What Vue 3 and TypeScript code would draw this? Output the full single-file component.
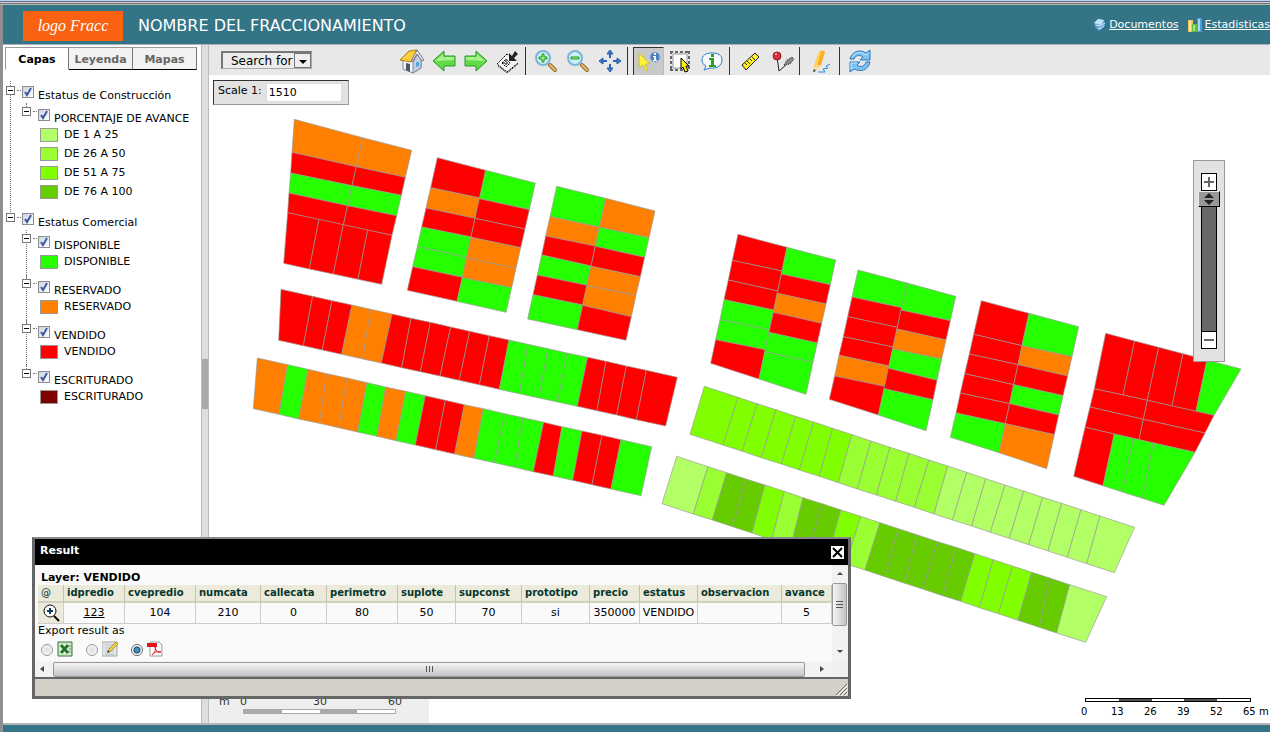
<script setup lang="ts">
import { ref } from 'vue'

type Point = [number, number]
type Status = 'R' | 'O' | 'G' | 'L' | 'M' | 'B' | 'D'

interface Band {
  a: [Point, Point]
  b: [Point, Point]
  axis: 0 | 1
  cutsA: number[]
  cutsB: number[]
  lots: string
}

interface Sheet {
  x: number
  y: number
  bands: Band[]
}

const fills: Record<Status, string> = {
  R: '#ff0000',
  O: '#ff8000',
  G: '#26ff00',
  L: '#b3ff66',
  M: '#99ff33',
  B: '#80ff00',
  D: '#66cc00',
}

// A block with two columns of lots that share a centre line.
function block(
  top: [Point, Point, Point],
  bottom: [Point, Point, Point],
  left: [number[], number[], string],
  right: [number[], number[], string],
): Band[] {
  return [
    { a: [top[0], bottom[0]], b: [top[1], bottom[1]], axis: 1, cutsA: left[0], cutsB: left[1], lots: left[2] },
    { a: [top[1], bottom[1]], b: [top[2], bottom[2]], axis: 1, cutsA: right[0], cutsB: right[1], lots: right[2] },
  ]
}

const sheets: Sheet[] = [
  {
    x: 93,
    y: 75,
    bands: [
      { a: [[163, 58], [143, 338]], b: [[368, 113], [310, 375]], axis: 1, cutsA: [157, 219, 279], cutsB: [200, 257, 317], lots: 'ORGR' },
      { a: [[368, 113], [310, 375]], b: [[515, 151], [456, 406]], axis: 1, cutsA: [200, 257, 317], cutsB: [232, 286, 347], lots: 'ORGR' },
      { a: [[143, 338], [456, 406]], b: [[131, 490], [425, 553]], axis: 0, cutsA: [237, 310, 383], cutsB: [208, 280, 354], lots: 'RRRR' },
      ...block(
        [[592, 173], [737, 211], [886, 249]],
        [[502, 571], [651, 604], [798, 637]],
        [[263, 324, 381, 440, 500], [294, 355, 411, 472, 532], 'RORGGR'],
        [[296, 355, 412, 474, 533], [329, 387, 443, 505, 563], 'GRROOG'],
      ),
      ...block(
        [[950, 259], [1097, 295], [1245, 333]],
        [[863, 657], [1012, 689], [1158, 721]],
        [[350, 408, 465, 525, 584], [381, 438, 498, 556, 615], 'GORGRG'],
        [[382, 439, 499, 557, 616], [413, 472, 530, 586, 650], 'OGROOR'],
      ),
      {
        a: [[123, 568], [1312, 832]],
        b: [[116, 721], [1277, 978]],
        axis: 0,
        cutsA: [218, 276, 336, 392, 456, 513, 571, 632, 689, 748, 807, 864, 924, 981, 1043, 1098, 1159, 1219],
        cutsB: [190, 247, 305, 368, 424, 485, 541, 600, 658, 718, 778, 838, 897, 953, 1012, 1071, 1130, 1189],
        lots: 'RRROORRRRRRGGGGRRRR',
      },
      {
        a: [[52, 774], [1235, 1040]],
        b: [[40, 926], [1203, 1187]],
        axis: 0,
        cutsA: [143, 204, 260, 321, 381, 437, 497, 556, 616, 673, 730, 794, 849, 911, 966, 1026, 1086, 1143],
        cutsB: [117, 176, 238, 296, 353, 411, 468, 526, 587, 644, 702, 763, 824, 880, 940, 998, 1056, 1113],
        lots: 'OGOOOGOGRROGGGRGRRG',
      },
    ],
  },
  {
    x: 1323,
    y: 435,
    bands: [
      ...block(
        [[264, 43], [411, 82], [557, 120]],
        [[182, 430], [327, 477], [468, 523]],
        [[121, 180, 239, 299, 359], [153, 213, 270, 329, 389], 'RRRGGR'],
        [[162, 220, 277, 337, 395], [194, 252, 310, 369, 427], 'GRORGG'],
      ),
      ...block(
        [[624, 150], [771, 189], [917, 229]],
        [[538, 538], [685, 585], [828, 632]],
        [[231, 290, 350, 406, 468], [263, 322, 381, 438, 499], 'GRRROR'],
        [[270, 327, 387, 445, 506], [302, 360, 417, 481, 539], 'GROGRG'],
      ),
      {
        a: [[163, 499], [1454, 922]],
        b: [[120, 643], [1393, 1058]],
        axis: 0,
        cutsA: [264, 321, 378, 437, 491, 548, 606, 663, 720, 777, 837, 893, 950, 1007, 1065, 1121, 1178, 1235, 1293, 1350],
        cutsB: [219, 277, 334, 394, 448, 508, 565, 622, 679, 737, 793, 852, 908, 965, 1021, 1078, 1136, 1194, 1252, 1310],
        lots: 'BBBBBBBMMMMMLLLLLLLLL',
      },
      {
        a: [[80, 709], [1370, 1130]],
        b: [[36, 851], [1307, 1267]],
        axis: 0,
        cutsA: [174, 230, 288, 345, 403, 459, 516, 573, 632, 690, 745, 800, 863, 918, 975, 1030, 1088, 1145, 1199, 1259],
        cutsB: [130, 187, 248, 306, 365, 423, 475, 532, 588, 645, 705, 765, 818, 878, 932, 988, 1045, 1104, 1168, 1220],
        lots: 'LMDDBMDDBMDDDDDBBBDDL',
      },
    ],
  },
  {
    x: 2163,
    y: 585,
    bands: [
      ...block(
        [[154, 92], [297, 130], [446, 170]],
        [[61, 502], [207, 548], [350, 596]],
        [[193, 252, 311, 369, 429], [227, 284, 344, 401, 461], 'RRRRRG'],
        [[227, 284, 344, 401, 461], [260, 318, 377, 435, 494], 'GORGRO'],
      ),
      { a: [[527, 190], [933, 297]], b: [[493, 356], [852, 436]], axis: 0, cutsA: [614, 686, 759, 831], cutsB: [579, 652, 726, 798], lots: 'RRRRG' },
      { a: [[493, 356], [465, 472]], b: [[652, 391], [627, 509]], axis: 1, cutsA: [411], cutsB: [448], lots: 'RR' },
      { a: [[652, 391], [627, 509]], b: [[852, 436], [795, 547]], axis: 1, cutsA: [448], cutsB: [489], lots: 'RR' },
      { a: [[465, 472], [795, 547]], b: [[431, 619], [702, 706]], axis: 0, cutsA: [553, 610, 670], cutsB: [519, 577, 637], lots: 'RGGG' },
    ],
  },
]

function cutPoints(edge: [Point, Point], axis: 0 | 1, cuts: number[]): Point[] {
  const [s, e] = edge
  const mids = cuts.map((c): Point => {
    const t = (c - s[axis]) / (e[axis] - s[axis])
    return [s[0] + t * (e[0] - s[0]), s[1] + t * (e[1] - s[1])]
  })
  return [s, ...mids, e]
}

const lots = sheets.flatMap((sheet) =>
  sheet.bands.flatMap((band) => {
    const a = cutPoints(band.a, band.axis, band.cutsA)
    const b = cutPoints(band.b, band.axis, band.cutsB)
    return band.lots.split('').map((status, i) => ({
      fill: fills[status as Status],
      points: [a[i], a[i + 1], b[i + 1], b[i]]
        .map(([x, y]) => `${Math.round(x + sheet.x)},${Math.round(y + sheet.y)}`)
        .join(' '),
    }))
  }),
)

const tabs = ['Capas', 'Leyenda', 'Mapas']
const activeTab = ref('Capas')

const tree = ref([
  {
    name: 'Estatus de Construcción',
    on: true,
    layers: [
      {
        name: 'PORCENTAJE DE AVANCE',
        on: true,
        classes: [
          { name: 'DE 1 A 25', tone: 'light' },
          { name: 'DE 26 A 50', tone: 'medium' },
          { name: 'DE 51 A 75', tone: 'bright' },
          { name: 'DE 76 A 100', tone: 'deep' },
        ],
      },
    ],
  },
  {
    name: 'Estatus Comercial',
    on: true,
    layers: [
      { name: 'DISPONIBLE', on: true, classes: [{ name: 'DISPONIBLE', tone: 'free' }] },
      { name: 'RESERVADO', on: true, classes: [{ name: 'RESERVADO', tone: 'held' }] },
      { name: 'VENDIDO', on: true, classes: [{ name: 'VENDIDO', tone: 'sold' }] },
      { name: 'ESCRITURADO', on: true, classes: [{ name: 'ESCRITURADO', tone: 'deeded' }] },
    ],
  },
])

const columns = [
  { name: 'idpredio', value: '123', width: 61 },
  { name: 'cvepredio', value: '104', width: 71 },
  { name: 'numcata', value: '210', width: 65 },
  { name: 'callecata', value: '0', width: 66 },
  { name: 'perimetro', value: '80', width: 71 },
  { name: 'suplote', value: '50', width: 58 },
  { name: 'supconst', value: '70', width: 66 },
  { name: 'prototipo', value: 'si', width: 68 },
  { name: 'precio', value: '350000', width: 50 },
  { name: 'estatus', value: 'VENDIDO', width: 58 },
  { name: 'observacion', value: '', width: 84 },
  { name: 'avance', value: '5', width: 50 },
]

const scale = ref('1510')
const zoom = ref(100)
const exportAs = ref('pdf')
const resultOpen = ref(true)
</script>

<template>
  <div class="page">
    <div class="frame-top"></div>
    <header class="header">
      <div class="logo">logo Fracc</div>
      <h1>NOMBRE DEL FRACCIONAMIENTO</h1>
      <nav class="links">
        <a href="#documentos">
          <svg width="15" height="16" viewBox="0 0 15 16" aria-hidden="true">
            <path d="M2 6 6 2l6 1 1 6-6 5-4-4z" fill="#5fa6da" />
            <path d="M2 6 6 2l6 1-3 5z" fill="#c2e3f7" />
            <path d="M4 8l4 1 5-3M6 11l2 1 4-3" stroke="#d5ecf9" fill="none" />
          </svg>
          <span>Documentos</span>
        </a>
        <a href="#estadisticas">
          <svg width="16" height="16" viewBox="0 0 16 16" aria-hidden="true">
            <path d="M1 3h5v12H1z" fill="#f6c35a" /><path d="M2 4h2v10H2z" fill="#ffe9ad" />
            <path d="M5 7h5v8H5z" fill="#62bd3e" /><path d="M6 8h2v6H6z" fill="#a7e489" />
            <path d="M10 1h5v14h-5z" fill="#4a9ddd" /><path d="M11 2h2v12h-2z" fill="#a8d6f7" />
          </svg>
          <span>Estadisticas</span>
        </a>
      </nav>
    </header>

    <div class="workspace">
      <aside class="sidebar">
        <div class="tabs" role="tablist">
          <button
            v-for="tab in tabs"
            :key="tab"
            type="button"
            role="tab"
            :aria-selected="activeTab === tab"
            :class="['tab', { active: activeTab === tab }]"
            @click="activeTab = tab"
          >{{ tab }}</button>
        </div>
        <ul class="tree">
          <li v-for="group in tree" :key="group.name" class="group">
            <div class="row group-row">
              <button type="button" class="expander" :aria-label="`Toggle ${group.name}`"></button>
              <label><input v-model="group.on" type="checkbox" /><span>{{ group.name }}</span></label>
            </div>
            <ul class="layers">
              <li v-for="layer in group.layers" :key="layer.name" class="layer">
                <div class="row layer-row">
                  <button type="button" class="expander" :aria-label="`Toggle ${layer.name}`"></button>
                  <label><input v-model="layer.on" type="checkbox" /><span>{{ layer.name }}</span></label>
                </div>
                <div v-for="item in layer.classes" :key="item.name" class="legend">
                  <span :class="['swatch', item.tone]"></span>
                  <span>{{ item.name }}</span>
                </div>
              </li>
            </ul>
          </li>
        </ul>
      </aside>

      <div class="splitter"><span></span></div>

      <main class="main">
        <div class="toolbar" role="toolbar">
          <div class="search">
            <select aria-label="Search for"><option>Search for</option></select>
            <span class="arrow"></span>
          </div>

          <div class="tools">
            <button type="button" class="tool" aria-label="Full extent">
              <svg width="26" height="26" viewBox="0 0 26 26">
                <path d="M4 12v9l10 4 8-5v-9l-5-5z" fill="#f3f5fa" stroke="#7b86a8" />
                <path d="M14 14v11l8-5v-9l-4-4z" fill="#c6cde2" stroke="#7b86a8" />
                <path d="M1 12 10 3l8-1-5 11-1 1z" fill="#f8cf3a" stroke="#a77c16" />
                <path d="m18 2 7 10-2 1-5-7-5 8-1-1z" fill="#e6eaf3" stroke="#777" />
                <path d="M7 15v7l4 2v-8z" fill="#4f5568" />
                <path d="M17 14h3v4l-3 1z" fill="#4ea9df" />
              </svg>
            </button>
            <button type="button" class="tool" aria-label="Back">
              <svg width="26" height="26" viewBox="0 0 26 26">
                <path d="M2 13 13 3v5h11v10H13v5z" fill="#5fdc48" stroke="#2a962c" />
                <path d="m4 13 8-7v3h11v3z" fill="#a8f28e" />
              </svg>
            </button>
            <button type="button" class="tool" aria-label="Forward">
              <svg width="26" height="26" viewBox="0 0 26 26">
                <path d="M24 13 13 3v5H2v10h11v5z" fill="#5fdc48" stroke="#2a962c" />
                <path d="m22 13-8-7v3H3v3z" fill="#a8f28e" />
              </svg>
            </button>
            <button type="button" class="tool" aria-label="Initial location">
              <svg width="26" height="26" viewBox="0 0 26 26">
                <path d="M2 16 12 6l11 8-10 9z" fill="#f6f6f6" />
                <path d="M12 6 2 16l10 8 11-9" fill="none" stroke="#000" stroke-dasharray="2 1" />
                <path d="m12 6 3 2M3 18l9 7 11-9" fill="none" stroke="#000" stroke-dasharray="1 1" />
                <path d="m7 15 4-4 4 4-4 4zM11 12v6M8 15h6" fill="none" stroke="#000" stroke-dasharray="2 1" />
                <path d="M14 5v8h8l-3-3 4-4-3-3-3 5z" fill="#222" />
              </svg>
            </button>
            <i class="sep"></i>
            <button type="button" class="tool" aria-label="Zoom in">
              <svg width="26" height="26" viewBox="0 0 26 26">
                <path d="m17 17 5 5" stroke="#8b6a37" stroke-width="4" stroke-linecap="round" />
                <path d="m17 17 5 5" stroke="#f5b85c" stroke-width="2" stroke-linecap="round" />
                <circle cx="10" cy="10" r="7" fill="#cdeefb" stroke="#79b3d6" stroke-width="2" />
                <path d="M9 6h2v3h3v2h-3v3H9v-3H6V9h3z" fill="#a8f07c" stroke="#179a1c" />
              </svg>
            </button>
            <button type="button" class="tool" aria-label="Zoom out">
              <svg width="26" height="26" viewBox="0 0 26 26">
                <path d="m17 17 5 5" stroke="#8b6a37" stroke-width="4" stroke-linecap="round" />
                <path d="m17 17 5 5" stroke="#f5b85c" stroke-width="2" stroke-linecap="round" />
                <circle cx="10" cy="10" r="7" fill="#cdeefb" stroke="#79b3d6" stroke-width="2" />
                <path d="M6 9h8v2H6z" fill="#a8f07c" stroke="#179a1c" />
              </svg>
            </button>
            <button type="button" class="tool" aria-label="Pan">
              <svg width="26" height="26" viewBox="0 0 26 26">
                <path d="M13 5v5M13 16v5M5 13h5M16 13h5" stroke="#2f66b5" stroke-width="2" />
                <path d="m13 2 3 4h-6zM13 24l3-4h-6zM2 13l4-3v6zM24 13l-4-3v6z" fill="#3d7bd0" stroke="#2a5ba8" />
              </svg>
            </button>
            <i class="sep"></i>
            <button type="button" class="tool active" aria-label="Identify">
              <svg width="26" height="26" viewBox="0 0 26 26">
                <circle cx="19" cy="8" r="5" fill="#4b7fc4" stroke="#9bb8df" />
                <path d="M18 4h2v2h-2zM17 7h3v4h1v1h-4v-1h1V8h-1z" fill="#fff" />
                <path d="M3 4v15l4-3 3 6 2-1-3-6h5z" fill="#fff23a" stroke="#c9bb3a" />
              </svg>
            </button>
            <button type="button" class="tool" aria-label="Select by rectangle">
              <svg width="26" height="26" viewBox="0 0 26 26">
                <path d="M6 6h14v14H6z" fill="#fff" stroke="#999" />
                <path d="M3 4h20M3 22h20M4 3v20M22 3v20" fill="none" stroke="#666" stroke-width="2" stroke-dasharray="3 2" />
                <path d="M14 10v11l2-2 2 5 3-1-2-5h3z" fill="#fff000" stroke="#000" />
              </svg>
            </button>
            <button type="button" class="tool" aria-label="Information">
              <svg width="26" height="26" viewBox="0 0 26 26">
                <path d="M13 5C6 5 3 8 3 12c0 3 2 5 4 6l-2 4 6-2c8 1 12-3 12-8s-4-7-10-7z" fill="#f6fbff" stroke="#2b7cc0" />
                <path d="M12 6h3v3h-3zM10 10h5v7h2v2h-7v-2h2v-5h-2z" fill="#2ca01e" />
              </svg>
            </button>
            <i class="sep"></i>
            <button type="button" class="tool" aria-label="Measure">
              <svg width="26" height="26" viewBox="0 0 26 26">
                <path d="M5 17 18 5l4 4L9 22z" fill="#ffec1f" stroke="#222" />
                <path d="m8 15 2 2M10 13l3 3M13 11l2 2M15 9l3 3" stroke="#333" />
              </svg>
            </button>
            <button type="button" class="tool" aria-label="Place marker">
              <svg width="26" height="26" viewBox="0 0 26 26">
                <path d="m8 9 2 14 8-7" fill="none" stroke="#222" />
                <path d="M15 17l3-5 5-3 2 2-4 5z" fill="#888" stroke="#333" stroke-dasharray="1 1" />
                <circle cx="8" cy="8" r="4" fill="#d8333b" stroke="#8c1b20" />
                <circle cx="7" cy="6" r="1" fill="#ffb3b3" />
              </svg>
            </button>
            <i class="sep"></i>
            <button type="button" class="tool wide" aria-label="Edit">
              <svg width="26" height="26" viewBox="0 0 26 26">
                <path d="m6 18 5-14q3-3 6 0l-4 13-5 5z" fill="#fbad25" />
                <path d="m6 18 5-14 2-1-4 15z" fill="#ffd55c" />
                <path d="m6 18-1 6 4-2 4-5z" fill="#f5d9a0" /><path d="m5 24 1-3 2 2z" fill="#333" />
                <path d="M10 24h7l-2-3 5-1-2-2 4-2" fill="none" stroke="#2a88e4" />
              </svg>
            </button>
            <i class="sep"></i>
            <button type="button" class="tool" aria-label="Refresh">
              <svg width="26" height="26" viewBox="0 0 26 26">
                <path d="M3 11C5 3 13 1 19 5l4-3v10H13l3-3c-4-3-8-1-9 2z" fill="#7cc3f2" stroke="#2d79be" />
                <path d="M23 14c-2 9-10 10-16 7l-4 3V14h10l-3 3c4 3 8 1 9-3z" fill="#7cc3f2" stroke="#2d79be" />
                <path d="M5 9c3-5 9-6 14-2l3-2M6 20l-2 1v-6h6" fill="none" stroke="#c5e7fb" />
              </svg>
            </button>
          </div>
        </div>

        <div class="map">
          <svg class="parcels" viewBox="0 0 3183 1944" preserveAspectRatio="xMinYMin meet" role="img" aria-label="Mapa de lotes">
            <polygon v-for="(lot, i) in lots" :key="i" :points="lot.points" :fill="lot.fill" />
          </svg>

          <label class="scale-box">
            <span>Scale 1:</span>
            <input v-model="scale" type="text" />
          </label>

          <div class="zoomer">
            <button type="button" aria-label="Zoom in one level">
              <svg width="14" height="14" viewBox="0 0 14 14"><path d="M7 2v10M2 7h10" stroke="#666" stroke-width="2" /></svg>
            </button>
            <input v-model="zoom" type="range" min="0" max="100" aria-label="Zoom level" />
            <button type="button" aria-label="Zoom out one level">
              <svg width="14" height="14" viewBox="0 0 14 14"><path d="M2 7h10" stroke="#666" stroke-width="2" /></svg>
            </button>
          </div>

          <div class="ruler-left">
            <div class="ruler-left-text"><span>m</span><span>0</span><span>30</span><span>60</span></div>
            <div class="ruler-left-bar"><i></i><i></i><i></i><i></i></div>
          </div>

          <div class="ruler-right">
            <div class="ruler-right-bar"><i></i><i></i><i></i><i></i><i></i></div>
            <div class="ruler-right-text">
              <span>0</span><span>13</span><span>26</span><span>39</span><span>52</span><span>65</span><span>m</span>
            </div>
          </div>
        </div>
      </main>
    </div>
    <footer class="footer"></footer>

    <section v-if="resultOpen" class="dialog" role="dialog" aria-labelledby="result-title">
      <div class="dialog-title">
        <h2 id="result-title">Result</h2>
        <button type="button" aria-label="Close" @click="resultOpen = false">
          <svg width="13" height="13" viewBox="0 0 13 13"><path d="m2 2 9 9M11 2l-9 9" stroke="#000" stroke-width="2" /></svg>
        </button>
      </div>
      <div class="dialog-body">
        <div class="result">
          <h3>Layer: VENDIDO</h3>
          <table>
            <colgroup>
              <col class="at" />
              <col v-for="c in columns" :key="c.name" :style="{ width: c.width + 'px' }" />
            </colgroup>
            <thead>
              <tr><th class="plain">@</th><th v-for="c in columns" :key="c.name">{{ c.name }}</th></tr>
            </thead>
            <tbody>
              <tr>
                <td class="pick">
                  <button type="button" aria-label="Zoom to lot">
                    <svg width="18" height="18" viewBox="0 0 18 18">
                      <circle cx="8" cy="7" r="6" fill="#fff" stroke="#111" stroke-width="1" />
                      <path d="M8 4v6M5 7h6" stroke="#123a5c" stroke-width="2" />
                      <path d="m12 12 5 5" stroke="#000" stroke-width="2" />
                    </svg>
                  </button>
                </td>
                <td v-for="(c, i) in columns" :key="c.name">
                  <a v-if="i === 0" href="#123">{{ c.value }}</a>
                  <template v-else>{{ c.value }}</template>
                </td>
              </tr>
            </tbody>
          </table>
          <div class="export-title">Export result as</div>
          <div class="export">
            <label aria-label="Excel">
              <input v-model="exportAs" type="radio" name="export" value="xls" />
              <svg width="16" height="16" viewBox="0 0 16 16">
                <path d="M1 1h14v14H1z" fill="#cfe5c8" stroke="#2f7d32" />
                <path d="M3 3h8v10H3z" fill="#f1f8ee" />
                <path d="m4 4 7 8M11 4l-7 8" stroke="#23762a" stroke-width="3" />
                <path d="M12 5h3M12 8h3M12 11h3" stroke="#5fa35c" />
              </svg>
            </label>
            <label aria-label="Text">
              <input v-model="exportAs" type="radio" name="export" value="csv" />
              <svg width="16" height="16" viewBox="0 0 16 16">
                <path d="M0 1h15v14H0z" fill="#e3e6e7" stroke="#a2a8ab" />
                <path d="M3 4h9M3 7h9M3 10h9M3 13h9" stroke="#b8c0c5" />
                <path d="m6 11 1-3 7-7 2 2-7 7z" fill="#f1cf4a" stroke="#b8922c" />
                <path d="m5 12 1-3 2 2z" fill="#444" />
              </svg>
            </label>
            <label aria-label="PDF">
              <input v-model="exportAs" type="radio" name="export" value="pdf" />
              <svg width="16" height="16" viewBox="0 0 16 16">
                <path d="M3 1h9l3 3v11H3z" fill="#fff" stroke="#999" />
                <path d="M0 2h10v4H0z" fill="#e1141c" />
                <path d="M5 14c3-2 4-5 3-8 1 4 3 6 6 5-4-1-7 0-9 3z" fill="none" stroke="#e1141c" />
              </svg>
            </label>
          </div>
        </div>
        <div class="vbar" aria-hidden="true">
          <svg width="16" height="18" viewBox="0 0 16 18"><path d="M8 7l3 3H5z" fill="#444" /></svg>
          <span class="vthumb"><i></i><i></i><i></i></span>
          <svg class="down" width="16" height="20" viewBox="0 0 16 20"><path d="M8 12 5 9h6z" fill="#444" /></svg>
        </div>
        <div class="hbar" aria-hidden="true">
          <svg width="18" height="16" viewBox="0 0 18 16"><path d="m5 8 4-3v6z" fill="#444" /></svg>
          <span class="hthumb"><i></i><i></i><i></i></span>
          <svg width="27" height="16" viewBox="0 0 27 16"><path d="m19 8-4-3v6z" fill="#444" /></svg>
        </div>
        <div class="corner"></div>
      </div>
      <div class="dialog-status">
        <svg width="14" height="14" viewBox="0 0 14 14" aria-hidden="true">
          <path d="M2 13 13 2M6 13l7-7M10 13l3-3" stroke="#666" />
          <path d="M3 14 14 3M7 14l7-7M11 14l3-3" stroke="#fff" />
        </svg>
      </div>
    </section>
  </div>
</template>

<style>
html,
body {
  margin: 0;
  overflow: hidden;
}
</style>

<style scoped>
.page {
  position: relative;
  box-sizing: border-box;
  display: flex;
  flex-direction: column;
  height: 100vh;
  border-left: 3px solid #8d8f93;
  background: #fff;
  color: #000;
  font: 11px/14px "DejaVu Sans", sans-serif;
}

.page * {
  box-sizing: border-box;
}

button {
  padding: 0;
  border: 0;
  background: none;
  font: inherit;
  color: inherit;
}

ul {
  margin: 0;
  padding: 0;
  list-style: none;
}

.frame-top {
  flex: none;
  height: 5px;
  margin-left: -3px;
  background: linear-gradient(#bdd3ee 1px, #5d6f8a 1px 2px, #cfcfcf 2px 3px, #77767a 3px 4px, #b9b6ac 4px);
}

/* header */
.header {
  display: flex;
  flex: none;
  align-items: center;
  height: 40px;
  padding-left: 20px;
  border-bottom: 1px solid #a9b4b8;
  background: #337487;
  color: #fff;
}

.logo {
  width: 100px;
  height: 30px;
  margin-top: 3px;
  background: #f86212;
  font: italic 16px/29px "Liberation Serif", serif;
  text-align: center;
}

.header h1 {
  flex: 1;
  margin: 2px 0 0 15px;
  font-size: 16px;
  font-weight: 400;
  line-height: 20px;
}

.links {
  display: flex;
  gap: 8px;
}

.links a {
  display: flex;
  gap: 2px;
  align-items: center;
  color: #fff;
}

/* sidebar */
.workspace {
  display: flex;
  flex: 1;
  min-height: 0;
}

.sidebar {
  flex: none;
  width: 198px;
  overflow: hidden;
}

.tabs {
  display: flex;
  margin: 2px 0 0 2px;
}

.tab {
  width: 64px;
  height: 23px;
  padding-top: 2px;
  border-top: 1px solid #999;
  border-right: 1px solid #777;
  border-bottom: 1px solid #000;
  background: #f2f2f2;
  color: #666;
  font-weight: 700;
}

.tab.active {
  border-bottom-color: #fff;
  border-left: 1px solid #999;
  background: #fff;
  color: #000;
}

.tree {
  margin: 13px 0 0 3px;
}

.group {
  position: relative;
  padding-bottom: 9px;
}

.group:not(:last-child)::before {
  position: absolute;
  top: -2px;
  bottom: -6px;
  left: 4px;
  border-left: 1px dotted #777;
  content: "";
}

.row {
  position: relative;
  display: flex;
  align-items: flex-start;
}

.row label {
  display: flex;
  gap: 4px;
  align-items: flex-start;
  white-space: nowrap;
}

.row label span {
  padding-top: 3px;
}

.group-row {
  height: 24px;
  padding-top: 3px;
}

.layers {
  margin-left: 16px;
}

.layer {
  position: relative;
  padding-bottom: 8px;
}

.layer:last-child {
  padding-bottom: 0;
}

.layer::before {
  position: absolute;
  top: -4px;
  left: 4px;
  height: 8px;
  border-left: 1px dotted #777;
  content: "";
}

.layer:not(:last-child)::before {
  height: auto;
  bottom: 0;
}

.layer-row {
  height: 18px;
  padding-top: 2px;
}

.expander {
  position: relative;
  width: 9px;
  height: 9px;
  margin-right: 7px;
  border: 1px solid #777;
  background: linear-gradient(#000, #000) center / 5px 1px no-repeat #fff;
}

.layer-row .expander {
  margin-top: -2px;
}

.expander::after {
  position: absolute;
  top: 3px;
  left: 10px;
  width: 4px;
  border-top: 1px dotted #777;
  content: "";
}

.row input {
  width: 12px;
  height: 12px;
  margin: 0;
  border: 1px solid #8b8f94;
  appearance: none;
  background: linear-gradient(135deg, #cfd3da, #fff);
}

.row input:checked {
  background:
    url("data:image/svg+xml,%3Csvg xmlns='http://www.w3.org/2000/svg' viewBox='0 0 10 10'%3E%3Cpath d='M2 5l2 3 4-7' fill='none' stroke='%233f58a8' stroke-width='2'/%3E%3C/svg%3E"),
    linear-gradient(135deg, #cfd3da, #fff);
}

.legend {
  display: flex;
  gap: 6px;
  align-items: center;
  height: 19px;
  margin-left: 18px;
}

.swatch {
  width: 18px;
  height: 14px;
  border: 1px solid #999;
}

.light { background: #b3ff66; }
.medium { background: #99ff33; }
.bright { background: #80ff00; }
.deep { background: #66cc00; }
.free { background: #26ff00; }
.held { background: #ff8000; }
.sold { background: #f00; }
.deeded { background: #800000; }

.splitter {
  position: relative;
  flex: none;
  width: 8px;
  border-right: 1px solid #bbb;
  border-left: 1px solid #bbb;
  background: #dedede;
}

.splitter span {
  display: block;
  height: 50px;
  margin-top: 314px;
  background: #aaa;
}

/* toolbar */
.main {
  display: flex;
  flex: 1;
  flex-direction: column;
  min-width: 0;
}

.toolbar {
  display: flex;
  flex: none;
  gap: 84px;
  height: 30px;
  padding-left: 12px;
  background: #e8e8e8;
}

.search {
  position: relative;
  width: 91px;
  height: 18px;
  margin-top: 6px;
}

.search select {
  width: 100%;
  height: 100%;
  padding: 0 0 0 8px;
  border: 1px solid #aaa;
  border-top: 2px solid #777;
  border-left: 2px solid #777;
  border-radius: 0;
  appearance: none;
  background: #ececec;
  color: #000;
  font: 12px/14px "DejaVu Sans", sans-serif;
}

.arrow {
  position: absolute;
  top: 2px;
  right: 1px;
  width: 17px;
  height: 15px;
  border: 1px solid #777;
  background: #eee;
  pointer-events: none;
}

.arrow::after {
  position: absolute;
  top: 6px;
  left: 4px;
  border: 4px solid transparent;
  border-top-color: #000;
  border-bottom: 0;
  content: "";
}

.tools {
  display: flex;
  align-items: flex-end;
}

.tool {
  display: flex;
  align-items: center;
  justify-content: center;
  width: 32px;
  height: 28px;
}

.tool.wide {
  width: 34px;
}

.tool.active {
  width: 31px;
  margin-left: 1px;
  border: 1px solid #333;
  border-right-color: #bbb;
  border-bottom: 0;
  background: #c9c9c9;
}

.sep {
  width: 1px;
  height: 28px;
  margin: 0 4px 0 1px;
  background: #333;
}

/* map */
.map {
  position: relative;
  flex: 1;
  min-height: 0;
  overflow: hidden;
}

.parcels {
  display: block;
  width: 100%;
}

.parcels polygon {
  stroke: #999;
  stroke-width: 2;
}

.scale-box {
  position: absolute;
  top: 5px;
  left: 4px;
  display: flex;
  gap: 4px;
  width: 136px;
  height: 25px;
  padding: 2px 6px 2px 4px;
  border: 1px solid #999;
  border-top-color: #333;
  border-left-color: #333;
  background: #e2e2e2;
}

.scale-box input {
  flex: 1;
  min-width: 0;
  height: 19px;
  padding: 0 2px;
  border: 1px solid #ddd;
  background: #fff;
  font: 11px/16px "DejaVu Sans", sans-serif;
}

.scale-box span {
  line-height: 15px;
}

.zoomer {
  position: absolute;
  top: 85px;
  right: 45px;
  display: flex;
  flex-direction: column;
  align-items: center;
  width: 32px;
  padding: 12px 0;
  border: 1px solid #999;
  background: #e2e2e2;
}

.zoomer button {
  width: 16px;
  height: 18px;
  border: 1px solid #000;
  background: #fff;
}

.zoomer button svg {
  display: block;
}

.zoomer input {
  width: 22px;
  height: 140px;
  margin: 0;
  appearance: none;
  background: linear-gradient(90deg, transparent 3px, #000 3px 4px, #696969 4px 18px, #000 18px 19px, transparent 19px);
  direction: rtl;
  writing-mode: vertical-lr;
}

.zoomer input::-webkit-slider-thumb {
  width: 22px;
  height: 16px;
  border: 1px solid #eee;
  border-right-color: #000;
  border-bottom-color: #000;
  appearance: none;
  background: #999
    url("data:image/svg+xml,%3Csvg xmlns='http://www.w3.org/2000/svg' viewBox='0 0 20 14'%3E%3Cpath d='M10 1l5 5H5zM10 13l5-5H5z' fill='%23222'/%3E%3C/svg%3E");
}

.ruler-left {
  position: absolute;
  bottom: 0;
  left: 0;
  width: 220px;
  height: 40px;
  padding: 12px 0 0 10px;
  background: #eee;
  color: #333;
}

.ruler-left-text {
  display: grid;
  grid-template-columns: 21px 73px 75px 30px;
}

.ruler-left-bar {
  display: grid;
  grid-template-columns: repeat(4, 1fr);
  width: 153px;
  height: 5px;
  margin-left: 24px;
  border: 1px solid #aaa;
  background: #fff;
}

.ruler-left-bar i:nth-child(odd) {
  background: #aaa;
}

.ruler-right {
  position: absolute;
  right: 0;
  bottom: 4px;
  width: 190px;
  font-size: 10px;
}

.ruler-right-bar {
  display: grid;
  grid-template-columns: repeat(5, 1fr);
  width: 166px;
  height: 4px;
  margin-left: 5px;
  border: 1px solid #000;
  background: #fff;
}

.ruler-right-bar i:nth-child(even) {
  background: #555;
}

.ruler-right-text {
  display: grid;
  grid-template-columns: 30px 33px 33px 33px 33px 16px 1fr;
  padding: 3px 0 0 1px;
}

.footer {
  flex: none;
  height: 9px;
  border-top: 2px solid #b5b5b5;
  background: #337487;
}

/* result window */
.dialog {
  position: absolute;
  top: 537px;
  left: 29px;
  width: 819px;
  border: 3px solid #666;
  border-top: 2px solid #888;
  background: #fafafa;
}

.dialog-title {
  display: flex;
  align-items: center;
  justify-content: space-between;
  height: 26px;
  padding: 0 4px 0 5px;
  background: #000;
  color: #fff;
}

.dialog-title h2,
.result h3 {
  margin: 0;
  font-size: 11px;
  font-weight: 700;
  line-height: 14px;
}

.dialog-title h2 {
  padding-bottom: 2px;
}

.dialog-title button {
  width: 13px;
  height: 13px;
  background: #fff;
}

.dialog-title button svg {
  display: block;
}

.dialog-body {
  display: grid;
  grid-template-rows: 96px 16px;
  grid-template-columns: 1fr 16px;
}

.result {
  min-width: 0;
  padding: 6px 0 0 3px;
  overflow: hidden;
}

.result h3 {
  padding-left: 3px;
}

table {
  width: 794px;
  border-collapse: separate;
  border-spacing: 0;
  table-layout: fixed;
}

.at {
  width: 26px;
}

th {
  height: 18px;
  padding: 0 0 0 3px;
  border-right: 1px solid #c4c1b2;
  border-bottom: 2px solid #d2cfbf;
  background: #ebeadb;
  color: #06372d;
  font-size: 10px;
  line-height: 16px;
  text-align: left;
}

th.plain {
  font-weight: 400;
}

td {
  height: 21px;
  padding: 0;
  border-right: 1px solid #ccc;
  border-bottom: 1px solid #ccc;
  font-size: 11px;
  line-height: 14px;
  text-align: center;
}

td a {
  color: #000;
}

.pick {
  background: #ebeadb;
}

.pick button,
.pick svg {
  display: block;
  margin: 0 auto;
}

.export {
  display: flex;
  gap: 13px;
  padding: 3px 0 0 3px;
}

.export label {
  display: flex;
  gap: 4px;
  align-items: center;
}

.export input {
  width: 12px;
  height: 12px;
  margin: 2px 0 0;
  border: 1px solid #999;
  border-radius: 50%;
  appearance: none;
  background: radial-gradient(#ddd, #fff);
}

.export input:checked {
  border-color: #666;
  background: radial-gradient(#3f93bd 2px, #123f63 3px, #fff 4px);
}

.vbar {
  display: flex;
  flex-direction: column;
  background: #f2f2f2;
}

.vthumb {
  display: flex;
  flex-direction: column;
  gap: 2px;
  align-items: center;
  justify-content: center;
  width: 15px;
  height: 43px;
  border: 1px solid #999;
  border-radius: 2px;
  background: linear-gradient(90deg, #f4f4f4, #c4c4c6);
}

.vthumb i {
  width: 7px;
  height: 1px;
  background: #555;
}

.down {
  margin-top: auto;
}

.hbar {
  display: flex;
  align-items: center;
  background: #f2f2f2;
}

.hthumb {
  display: flex;
  flex: 1;
  gap: 2px;
  align-items: center;
  justify-content: center;
  height: 15px;
  border: 1px solid #999;
  border-radius: 2px;
  background: linear-gradient(#f4f4f4, #c4c4c6);
}

.hthumb i {
  width: 1px;
  height: 6px;
  background: #555;
}

.corner {
  background: #f0f0f0;
}

.dialog-status {
  display: flex;
  align-items: flex-end;
  justify-content: flex-end;
  height: 19px;
  border-top: 2px solid #666;
  background: #d4d0c8;
}
</style>
